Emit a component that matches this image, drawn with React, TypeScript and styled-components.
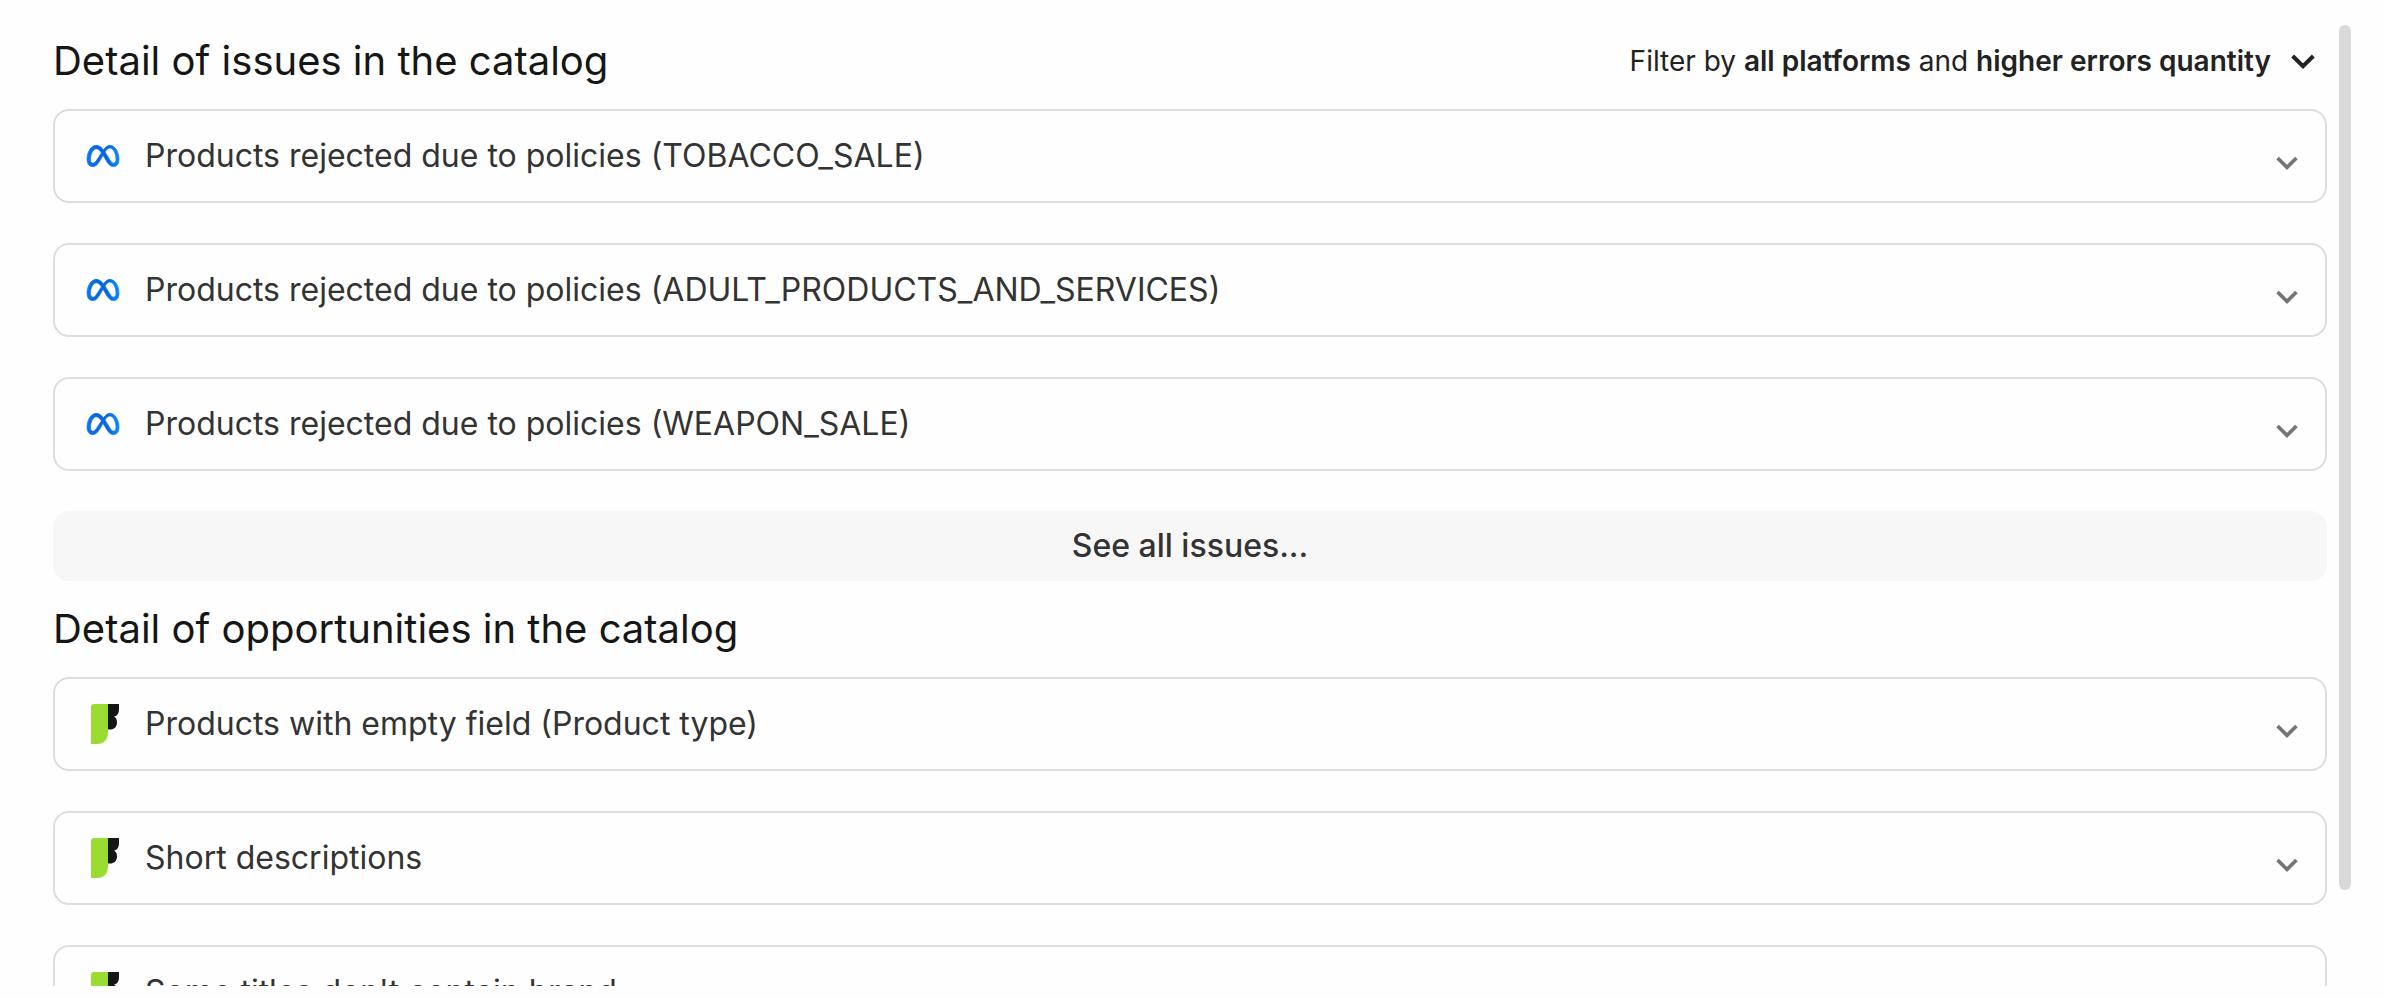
import React from "react";
import styled, { createGlobalStyle } from "styled-components";
import { SiMeta } from "react-icons/si";

const GlobalStyle = createGlobalStyle`
  *, *::before, *::after { box-sizing: border-box; }
  body {
    margin: 0;
    background: #fefefe;
    color: #161616;
    font-family: Inter, "Liberation Sans", sans-serif;
  }
  h2, ul { margin: 0; padding: 0; }
  button { font-family: inherit; cursor: pointer; }
`;

const Page = styled.div`
  display: flex;
  gap: 12px;
  height: 100vh;
  padding: 25px 33px 12px 53px;
  overflow: hidden;
`;

const Content = styled.main`
  flex: 1;
  min-width: 0;
  overflow: hidden;
`;

const ScrollTrack = styled.div`
  flex: none;
  width: 12px;
`;

const ScrollThumb = styled.div`
  height: 90%;
  border-radius: 6px;
  background: #d9d9d9;
`;

const SectionHeader = styled.header<{ $first?: boolean }>`
  display: flex;
  align-items: center;
  justify-content: space-between;
  padding: ${(p) => (p.$first ? "12px 0 24px" : "24px 0")};
`;

const Title = styled.h2`
  font-size: 40px;
  line-height: 48px;
  font-weight: 400;
`;

const FilterButton = styled.button`
  display: flex;
  align-items: center;
  gap: 20px;
  padding: 0 12px 0 0;
  border: 0;
  background: none;
  color: #222;
  font-size: 28px;
  line-height: 48px;

  strong { font-weight: 600; }
`;

const List = styled.ul`
  display: flex;
  flex-direction: column;
  gap: 40px;
  list-style: none;
`;

const Row = styled.button`
  display: flex;
  align-items: center;
  width: 100%;
  height: 94px;
  padding: 0 27px 0 31px;
  border: 2px solid #ddd;
  border-radius: 16px;
  background: #fefefe;
  color: #333;
  font-size: 32px;
  line-height: 40px;
  text-align: left;
`;

const IconSlot = styled.span<{ $wide: boolean }>`
  display: flex;
  flex: none;
  align-items: center;
  width: 38px;
  margin-right: 21px;
  padding-left: ${(p) => (p.$wide ? "1px" : "5px")};
`;

const RowLabel = styled.span`
  flex: 1;
  min-width: 0;
`;

const RowArrow = styled.span`
  display: flex;
  padding-top: 14px;
  color: #757575;
`;

const SeeAllButton = styled.button`
  display: block;
  width: 100%;
  margin-top: 40px;
  padding: 15px 0;
  border: 0;
  border-radius: 16px;
  background: #f7f7f7;
  color: #333;
  font-size: 32px;
  line-height: 40px;
  font-weight: 500;
`;

const MetaLogo = styled(SiMeta)`
  fill: url(#metaBlue);
  stroke: url(#metaBlue);
  stroke-width: 0.5px;
  overflow: visible;
`;

const HiddenDefs = styled.svg`
  position: absolute;
  width: 0;
  height: 0;
`;

function GradientDefs() {
  return (
    <HiddenDefs aria-hidden="true">
      <defs>
        <linearGradient id="metaBlue" x1="0" y1="0" x2="1" y2="0">
          <stop offset="0" stopColor="#0a78f2" />
          <stop offset="0.3" stopColor="#0668e1" />
          <stop offset="0.65" stopColor="#0668e1" />
          <stop offset="0.9" stopColor="#0a82fb" />
        </linearGradient>
      </defs>
    </HiddenDefs>
  );
}

function BrandIcon() {
  return (
    <svg width="28" height="40" viewBox="0 0 28 40" aria-hidden="true">
      <path d="M17 0H28V5C28 9 26.500 12 23 12.500C25 13.500 26 15.800 26 18.500C26 23 23 25.500 19 25.500H17Z" fill="#161616" />
      <path d="M3 0H17V28C17 36 13 40 6 40H0V3Q0 0 3 0Z" fill="#9adc32" />
    </svg>
  );
}

function Chevron({ width, height }: { width: number; height: number }) {
  return (
    <svg width={width} height={height} viewBox="0 0 24 15" fill="none" aria-hidden="true">
      <path d="M1.700 2L12 12.200L22.300 2" stroke="currentColor" strokeWidth="4" />
    </svg>
  );
}

type Issue = { label: string; source: "meta" | "brand" };

const issues: Issue[] = [
  { label: "Products rejected due to policies (TOBACCO_SALE)", source: "meta" },
  { label: "Products rejected due to policies (ADULT_PRODUCTS_AND_SERVICES)", source: "meta" },
  { label: "Products rejected due to policies (WEAPON_SALE)", source: "meta" },
];

const opportunities: Issue[] = [
  { label: "Products with empty field (Product type)", source: "brand" },
  { label: "Short descriptions", source: "brand" },
  { label: "Some titles don't contain brand", source: "brand" },
];

function IssueList({ items }: { items: Issue[] }) {
  return (
    <List>
      {items.map((item) => (
        <li key={item.label}>
          <Row type="button" aria-expanded={false}>
            <IconSlot $wide={item.source === "meta"}>
              {item.source === "meta" ? <MetaLogo size={32} aria-hidden="true" /> : <BrandIcon />}
            </IconSlot>
            <RowLabel>{item.label}</RowLabel>
            <RowArrow>
              <Chevron width={22} height={14} />
            </RowArrow>
          </Row>
        </li>
      ))}
    </List>
  );
}

export default function App() {
  return (
    <>
      <GlobalStyle />
      <GradientDefs />
      <Page>
        <Content>
          <SectionHeader $first>
            <Title>Detail of issues in the catalog</Title>
            <FilterButton type="button">
              <span>
                Filter by <strong>all platforms</strong> and <strong>higher errors quantity</strong>
              </span>
              <Chevron width={24} height={15} />
            </FilterButton>
          </SectionHeader>
          <IssueList items={issues} />
          <SeeAllButton type="button">See all issues...</SeeAllButton>
          <SectionHeader>
            <Title>Detail of opportunities in the catalog</Title>
          </SectionHeader>
          <IssueList items={opportunities} />
        </Content>
        <ScrollTrack>
          <ScrollThumb />
        </ScrollTrack>
      </Page>
    </>
  );
}
